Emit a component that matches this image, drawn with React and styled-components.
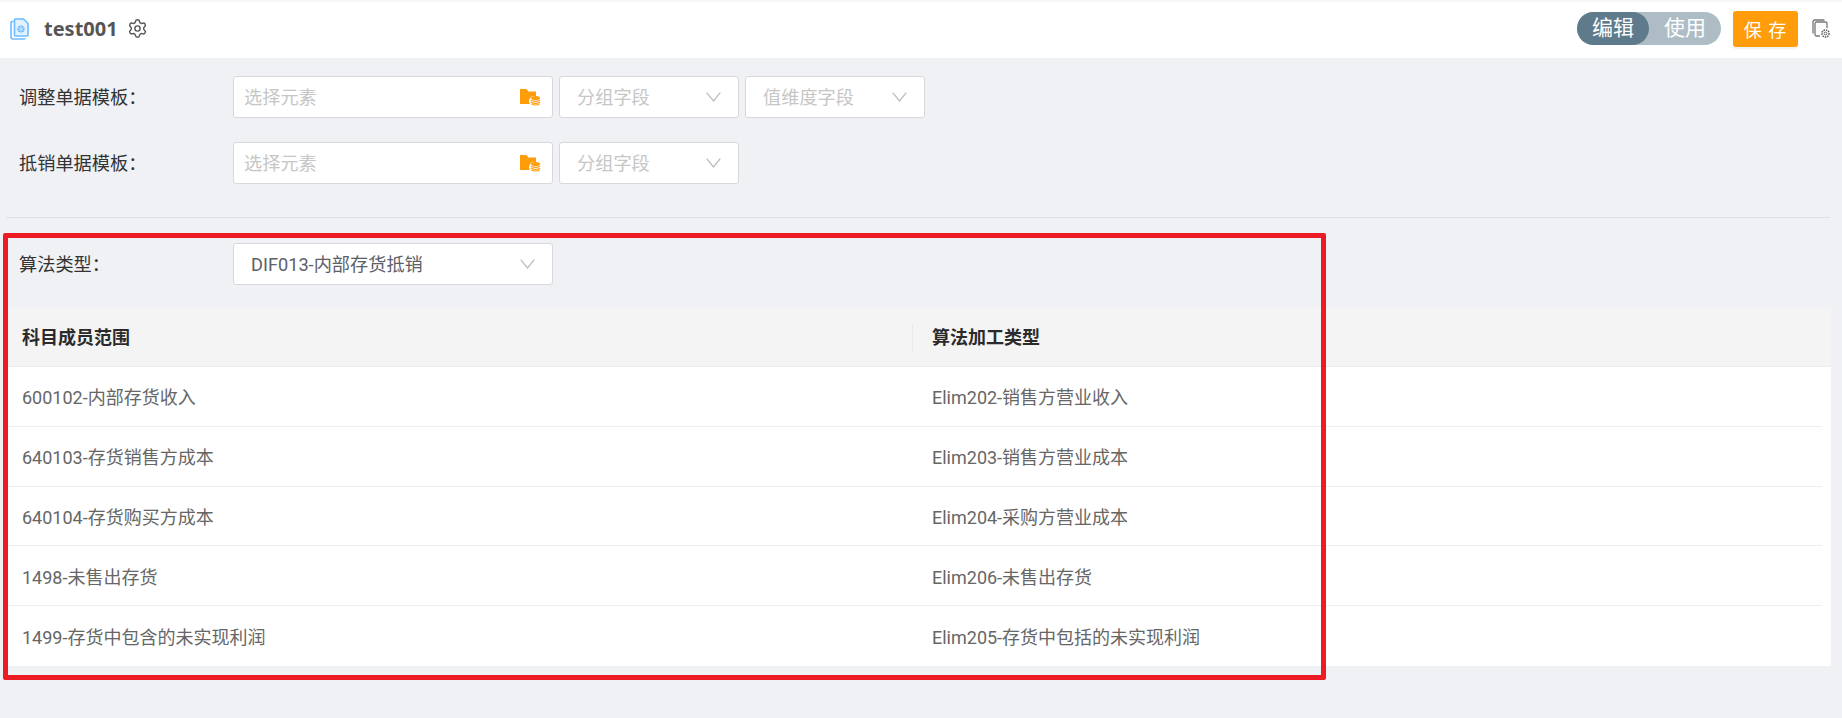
import React from 'react'
import styled, { createGlobalStyle } from 'styled-components'
import { Settings } from 'lucide-react'

const GlobalStyle = createGlobalStyle`
  html, body {
    margin: 0;
    padding: 0;
    height: 100%;
    overflow: hidden;
    background: #f0f1f5;
    font-family: Roboto, "Noto Sans CJK SC", sans-serif;
  }
  * {
    box-sizing: border-box;
  }
`

const Page = styled.div`
  position: relative;
  height: 718px;
  background: #f0f1f5;
`

const TopBar = styled.header`
  display: flex;
  align-items: center;
  height: 58px;
  padding: 0 11px 3px 10px;
  background: #fff;
  border-top: 2px solid #f6f6f8;
`

const Title = styled.h1`
  margin: 0 9px 0 15px;
  font-family: "Noto Sans", sans-serif;
  font-size: 20px;
  font-weight: 700;
  color: #555;
  line-height: 24px;
`

const Spacer = styled.div`
  flex: 1;
`

const Toggle = styled.div`
  display: flex;
  width: 144px;
  height: 33px;
  border-radius: 17px;
  background: #aebdc5;
`

const ToggleItem = styled.div`
  width: 72px;
  border-radius: 17px;
  text-align: center;
  line-height: 32px;
  font-size: 21px;
  color: #fff;
  background: ${(p) => (p.$active ? '#5f7b8b' : 'transparent')};
`

const SaveButton = styled.button`
  width: 65px;
  height: 36px;
  margin: 0 13px 0 12px;
  padding: 0;
  border: 0;
  border-radius: 3px;
  background: #ff9c0a;
  color: #fff;
  font-family: inherit;
  font-size: 18px;
  letter-spacing: 1px;
  box-shadow: 0 2px 2px rgba(0, 0, 0, 0.06);
`

const Form = styled.section`
  display: flex;
  flex-direction: column;
  gap: 24px;
  padding: 18px 0 0 0;
`

const FormRow = styled.div`
  display: flex;
  align-items: center;
  gap: 6px;
  height: 42px;
`

const Label = styled.label`
  width: 227px;
  padding: 0 0 2px 19px;
  font-size: 18.2px;
  color: #333;
  white-space: nowrap;
`

const Field = styled.div`
  display: flex;
  align-items: center;
  justify-content: space-between;
  width: ${(p) => p.$width}px;
  height: 42px;
  padding: ${(p) => (p.$search ? '0 11px 0 10px' : '0 17px 0 17px')};
  background: #fff;
  border: 1px solid #d8d8dc;
  border-radius: 3px;
  font-size: 18.2px;
  color: ${(p) => (p.$filled ? '#5c6068' : '#c6c6c6')};
  white-space: nowrap;
`

const FieldText = styled.span`
  padding-bottom: 2px;
`

const Divider = styled.hr`
  height: 1px;
  margin: 33px 12px 0 6px;
  border: 0;
  background: #dfe0e3;
`

const AlgoRow = styled(FormRow)`
  margin-top: 25px;
`

const Table = styled.div`
  margin: 23px 11px 0 6px;
  background: #fff;
`

const HeaderRow = styled.div`
  display: grid;
  grid-template-columns: 906px 1fr;
  align-items: center;
  height: 59px;
  background: #f4f4f5;
  border-bottom: 1px solid #ececee;
`

const HeaderCell = styled.div`
  padding-left: ${(p) => (p.$second ? '19px' : '16px')};
  border-left: ${(p) => (p.$second ? '1px solid #e9e9eb' : '0')};
  line-height: 29px;
  font-size: 18px;
  font-weight: 700;
  color: #2b2b2b;
`

const Rows = styled.div`
  padding-right: 9px;
`

const BodyRow = styled.div`
  display: grid;
  grid-template-columns: 906px 1fr;
  align-items: center;
  height: 59.8px;
  border-bottom: 1px solid ${(p) => (p.$last ? 'transparent' : '#eeeeef')};
`

const BodyCell = styled.div`
  padding-left: ${(p) => (p.$second ? '20px' : '16px')};
  font-size: 18px;
  color: #666;
  white-space: nowrap;
`

// red annotation frame drawn over the screenshot
const Annotation = styled.div`
  position: absolute;
  left: 3px;
  top: 233px;
  width: 1323px;
  height: 447px;
  border: 5px solid #ed1c24;
  border-radius: 2px;
  pointer-events: none;
`

const FileIcon = () => (
  <svg width="19" height="22" viewBox="0 0 19 22" fill="none">
    <path d="M3.500 3.500H2a1 1 0 0 0-1 1V19a2 2 0 0 0 2 2h11a1 1 0 0 0 1-1" stroke="#6cbcff" strokeWidth="1.600" />
    <path d="M4.500 2a1 1 0 0 1 1-1h8l4.500 4.500V17a1 1 0 0 1-1 1h-11.500a1 1 0 0 1-1-1z" fill="#e3f2ff" stroke="#6cbcff" strokeWidth="1.600" />
    <circle cx="11" cy="11" r="3.600" fill="#6cbcff" />
    <path d="M11 8v6M8.300 9.500l5.400 3M13.700 9.500l-5.400 3" stroke="#e6f4ff" strokeWidth="0.700" />
  </svg>
)

const CopyGearIcon = () => (
  <svg width="20" height="20" viewBox="0 0 20 20" fill="none">
    <path d="M2 14.500V3a2 2 0 0 1 2-2h9.500" stroke="#777" strokeWidth="1.300" />
    <path d="M9 17H5.500A1.500 1.500 0 0 1 4 15.500V4.500A1.500 1.500 0 0 1 5.500 3h9A1.500 1.500 0 0 1 16 4.500V9" stroke="#777" strokeWidth="1.300" />
    <circle cx="14.500" cy="14.500" r="3.600" fill="#fff" stroke="#666" strokeWidth="1.500" strokeDasharray="1.600 0.800" />
    <circle cx="14.500" cy="14.500" r="1.400" stroke="#666" strokeWidth="1" />
  </svg>
)

const FolderIcon = () => (
  <svg width="22" height="20" viewBox="0 -1 22 20">
    <path d="M1 1h6.500l2 2.500H17V8.500a5 5 0 0 0-6 7.500H1z" fill="#ff9c0a" />
    <ellipse cx="16.500" cy="10" rx="4.500" ry="2" fill="#ff9c0a" />
    <path d="M12 12c1 1.800 8 1.800 9 0M12 14c1 1.800 8 1.800 9 0M12.500 15.800c1.500 1.600 6.500 1.600 8 0" stroke="#ff9c0a" strokeWidth="1.200" fill="none" />
  </svg>
)

const Chevron = () => (
  <svg width="15" height="10" viewBox="0 0 15 10" fill="none">
    <path d="M0.700 0.700L7.500 9L14.300 0.700" stroke="#bdbdbd" strokeWidth="1.300" />
  </svg>
)

const Select = ({ width, filled, children }) => (
  <Field $width={width} $filled={filled}>
    <FieldText>{children}</FieldText>
    <Chevron />
  </Field>
)

const ElementPicker = () => (
  <Field $width={320} $search>
    <FieldText>选择元素</FieldText>
    <FolderIcon />
  </Field>
)

const rows = [
  ['600102-内部存货收入', 'Elim202-销售方营业收入'],
  ['640103-存货销售方成本', 'Elim203-销售方营业成本'],
  ['640104-存货购买方成本', 'Elim204-采购方营业成本'],
  ['1498-未售出存货', 'Elim206-未售出存货'],
  ['1499-存货中包含的未实现利润', 'Elim205-存货中包括的未实现利润']
]

const App = () => (
  <Page>
    <GlobalStyle />
    <TopBar>
      <FileIcon />
      <Title>test001</Title>
      <Settings size={21} color="#555" strokeWidth={1.6} />
      <Spacer />
      <Toggle>
        <ToggleItem $active>编辑</ToggleItem>
        <ToggleItem>使用</ToggleItem>
      </Toggle>
      <SaveButton>保 存</SaveButton>
      <CopyGearIcon />
    </TopBar>
    <Form>
      <FormRow>
        <Label>调整单据模板：</Label>
        <ElementPicker />
        <Select width={180}>分组字段</Select>
        <Select width={180}>值维度字段</Select>
      </FormRow>
      <FormRow>
        <Label>抵销单据模板：</Label>
        <ElementPicker />
        <Select width={180}>分组字段</Select>
      </FormRow>
    </Form>
    <Divider />
    <AlgoRow>
      <Label>算法类型：</Label>
      <Select width={320} filled>DIF013-内部存货抵销</Select>
    </AlgoRow>
    <Table>
      <HeaderRow>
        <HeaderCell>科目成员范围</HeaderCell>
        <HeaderCell $second>算法加工类型</HeaderCell>
      </HeaderRow>
      <Rows>
        {rows.map(([member, type], i) => (
          <BodyRow key={member} $last={i === rows.length - 1}>
            <BodyCell>{member}</BodyCell>
            <BodyCell $second>{type}</BodyCell>
          </BodyRow>
        ))}
      </Rows>
    </Table>
    <Annotation />
  </Page>
)

export default App
